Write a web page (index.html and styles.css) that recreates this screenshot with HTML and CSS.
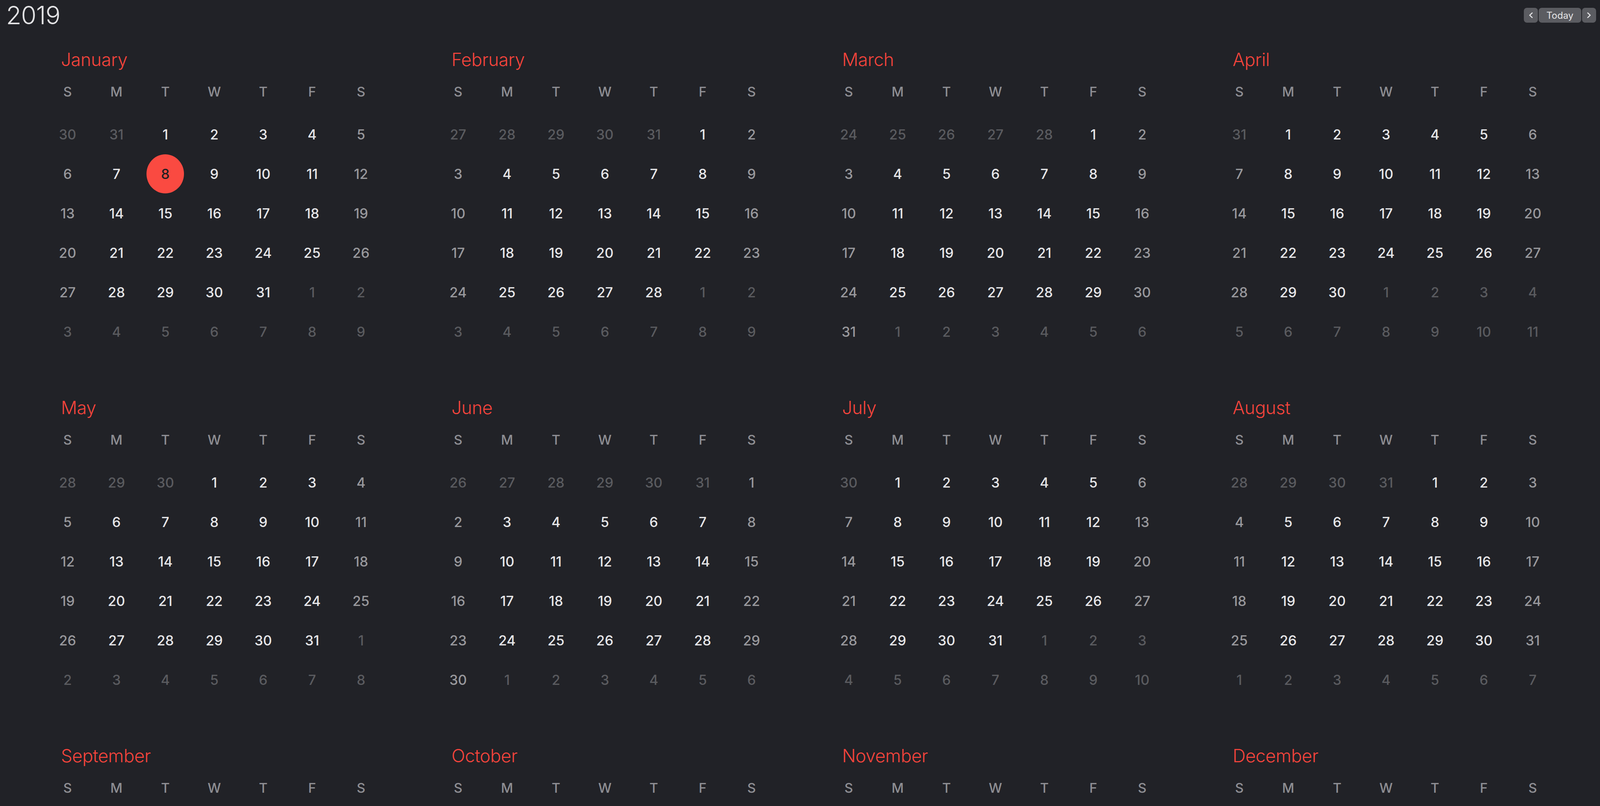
FILE: index.html
```html
<!DOCTYPE html>
<html lang="en">
<head>
<meta charset="utf-8">
<title>2019</title>
<link rel="stylesheet" href="styles.css">
</head>
<body>
<header class="header">
  <h1 class="year">2019</h1>
  <nav class="nav">
    <button class="btn arrow" type="button" aria-label="Previous year"><svg viewBox="0 0 12 16" width="12" height="16"><polyline points="9.5,2 3,8 9.5,14"/></svg></button>
    <button class="btn today-btn" type="button">Today</button>
    <button class="btn arrow" type="button" aria-label="Next year"><svg viewBox="0 0 12 16" width="12" height="16"><polyline points="2.5,2 9,8 2.5,14"/></svg></button>
  </nav>
</header>
<main class="months">

<section class="month">
  <h2 class="month-title">January</h2>
  <div class="weekdays"><span>S</span><span>M</span><span>T</span><span>W</span><span>T</span><span>F</span><span>S</span></div>
  <div class="days">
    <span class="o">30</span><span class="o">31</span><span>1</span><span>2</span><span>3</span><span>4</span><span class="w">5</span>
    <span class="w">6</span><span>7</span><span><span class="today">8</span></span><span>9</span><span>10</span><span>11</span><span class="w">12</span>
    <span class="w">13</span><span>14</span><span>15</span><span>16</span><span>17</span><span>18</span><span class="w">19</span>
    <span class="w">20</span><span>21</span><span>22</span><span>23</span><span>24</span><span>25</span><span class="w">26</span>
    <span class="w">27</span><span>28</span><span>29</span><span>30</span><span>31</span><span class="o">1</span><span class="o">2</span>
    <span class="o">3</span><span class="o">4</span><span class="o">5</span><span class="o">6</span><span class="o">7</span><span class="o">8</span><span class="o">9</span>
  </div>
</section>

<section class="month">
  <h2 class="month-title">February</h2>
  <div class="weekdays"><span>S</span><span>M</span><span>T</span><span>W</span><span>T</span><span>F</span><span>S</span></div>
  <div class="days">
    <span class="o">27</span><span class="o">28</span><span class="o">29</span><span class="o">30</span><span class="o">31</span><span>1</span><span class="w">2</span>
    <span class="w">3</span><span>4</span><span>5</span><span>6</span><span>7</span><span>8</span><span class="w">9</span>
    <span class="w">10</span><span>11</span><span>12</span><span>13</span><span>14</span><span>15</span><span class="w">16</span>
    <span class="w">17</span><span>18</span><span>19</span><span>20</span><span>21</span><span>22</span><span class="w">23</span>
    <span class="w">24</span><span>25</span><span>26</span><span>27</span><span>28</span><span class="o">1</span><span class="o">2</span>
    <span class="o">3</span><span class="o">4</span><span class="o">5</span><span class="o">6</span><span class="o">7</span><span class="o">8</span><span class="o">9</span>
  </div>
</section>

<section class="month">
  <h2 class="month-title">March</h2>
  <div class="weekdays"><span>S</span><span>M</span><span>T</span><span>W</span><span>T</span><span>F</span><span>S</span></div>
  <div class="days">
    <span class="o">24</span><span class="o">25</span><span class="o">26</span><span class="o">27</span><span class="o">28</span><span>1</span><span class="w">2</span>
    <span class="w">3</span><span>4</span><span>5</span><span>6</span><span>7</span><span>8</span><span class="w">9</span>
    <span class="w">10</span><span>11</span><span>12</span><span>13</span><span>14</span><span>15</span><span class="w">16</span>
    <span class="w">17</span><span>18</span><span>19</span><span>20</span><span>21</span><span>22</span><span class="w">23</span>
    <span class="w">24</span><span>25</span><span>26</span><span>27</span><span>28</span><span>29</span><span class="w">30</span>
    <span class="w">31</span><span class="o">1</span><span class="o">2</span><span class="o">3</span><span class="o">4</span><span class="o">5</span><span class="o">6</span>
  </div>
</section>

<section class="month">
  <h2 class="month-title">April</h2>
  <div class="weekdays"><span>S</span><span>M</span><span>T</span><span>W</span><span>T</span><span>F</span><span>S</span></div>
  <div class="days">
    <span class="o">31</span><span>1</span><span>2</span><span>3</span><span>4</span><span>5</span><span class="w">6</span>
    <span class="w">7</span><span>8</span><span>9</span><span>10</span><span>11</span><span>12</span><span class="w">13</span>
    <span class="w">14</span><span>15</span><span>16</span><span>17</span><span>18</span><span>19</span><span class="w">20</span>
    <span class="w">21</span><span>22</span><span>23</span><span>24</span><span>25</span><span>26</span><span class="w">27</span>
    <span class="w">28</span><span>29</span><span>30</span><span class="o">1</span><span class="o">2</span><span class="o">3</span><span class="o">4</span>
    <span class="o">5</span><span class="o">6</span><span class="o">7</span><span class="o">8</span><span class="o">9</span><span class="o">10</span><span class="o">11</span>
  </div>
</section>

<section class="month">
  <h2 class="month-title">May</h2>
  <div class="weekdays"><span>S</span><span>M</span><span>T</span><span>W</span><span>T</span><span>F</span><span>S</span></div>
  <div class="days">
    <span class="o">28</span><span class="o">29</span><span class="o">30</span><span>1</span><span>2</span><span>3</span><span class="w">4</span>
    <span class="w">5</span><span>6</span><span>7</span><span>8</span><span>9</span><span>10</span><span class="w">11</span>
    <span class="w">12</span><span>13</span><span>14</span><span>15</span><span>16</span><span>17</span><span class="w">18</span>
    <span class="w">19</span><span>20</span><span>21</span><span>22</span><span>23</span><span>24</span><span class="w">25</span>
    <span class="w">26</span><span>27</span><span>28</span><span>29</span><span>30</span><span>31</span><span class="o">1</span>
    <span class="o">2</span><span class="o">3</span><span class="o">4</span><span class="o">5</span><span class="o">6</span><span class="o">7</span><span class="o">8</span>
  </div>
</section>

<section class="month">
  <h2 class="month-title">June</h2>
  <div class="weekdays"><span>S</span><span>M</span><span>T</span><span>W</span><span>T</span><span>F</span><span>S</span></div>
  <div class="days">
    <span class="o">26</span><span class="o">27</span><span class="o">28</span><span class="o">29</span><span class="o">30</span><span class="o">31</span><span class="w">1</span>
    <span class="w">2</span><span>3</span><span>4</span><span>5</span><span>6</span><span>7</span><span class="w">8</span>
    <span class="w">9</span><span>10</span><span>11</span><span>12</span><span>13</span><span>14</span><span class="w">15</span>
    <span class="w">16</span><span>17</span><span>18</span><span>19</span><span>20</span><span>21</span><span class="w">22</span>
    <span class="w">23</span><span>24</span><span>25</span><span>26</span><span>27</span><span>28</span><span class="w">29</span>
    <span class="w">30</span><span class="o">1</span><span class="o">2</span><span class="o">3</span><span class="o">4</span><span class="o">5</span><span class="o">6</span>
  </div>
</section>

<section class="month">
  <h2 class="month-title">July</h2>
  <div class="weekdays"><span>S</span><span>M</span><span>T</span><span>W</span><span>T</span><span>F</span><span>S</span></div>
  <div class="days">
    <span class="o">30</span><span>1</span><span>2</span><span>3</span><span>4</span><span>5</span><span class="w">6</span>
    <span class="w">7</span><span>8</span><span>9</span><span>10</span><span>11</span><span>12</span><span class="w">13</span>
    <span class="w">14</span><span>15</span><span>16</span><span>17</span><span>18</span><span>19</span><span class="w">20</span>
    <span class="w">21</span><span>22</span><span>23</span><span>24</span><span>25</span><span>26</span><span class="w">27</span>
    <span class="w">28</span><span>29</span><span>30</span><span>31</span><span class="o">1</span><span class="o">2</span><span class="o">3</span>
    <span class="o">4</span><span class="o">5</span><span class="o">6</span><span class="o">7</span><span class="o">8</span><span class="o">9</span><span class="o">10</span>
  </div>
</section>

<section class="month">
  <h2 class="month-title">August</h2>
  <div class="weekdays"><span>S</span><span>M</span><span>T</span><span>W</span><span>T</span><span>F</span><span>S</span></div>
  <div class="days">
    <span class="o">28</span><span class="o">29</span><span class="o">30</span><span class="o">31</span><span>1</span><span>2</span><span class="w">3</span>
    <span class="w">4</span><span>5</span><span>6</span><span>7</span><span>8</span><span>9</span><span class="w">10</span>
    <span class="w">11</span><span>12</span><span>13</span><span>14</span><span>15</span><span>16</span><span class="w">17</span>
    <span class="w">18</span><span>19</span><span>20</span><span>21</span><span>22</span><span>23</span><span class="w">24</span>
    <span class="w">25</span><span>26</span><span>27</span><span>28</span><span>29</span><span>30</span><span class="w">31</span>
    <span class="o">1</span><span class="o">2</span><span class="o">3</span><span class="o">4</span><span class="o">5</span><span class="o">6</span><span class="o">7</span>
  </div>
</section>

<section class="month">
  <h2 class="month-title">September</h2>
  <div class="weekdays"><span>S</span><span>M</span><span>T</span><span>W</span><span>T</span><span>F</span><span>S</span></div>
</section>

<section class="month">
  <h2 class="month-title">October</h2>
  <div class="weekdays"><span>S</span><span>M</span><span>T</span><span>W</span><span>T</span><span>F</span><span>S</span></div>
</section>

<section class="month">
  <h2 class="month-title">November</h2>
  <div class="weekdays"><span>S</span><span>M</span><span>T</span><span>W</span><span>T</span><span>F</span><span>S</span></div>
</section>

<section class="month">
  <h2 class="month-title">December</h2>
  <div class="weekdays"><span>S</span><span>M</span><span>T</span><span>W</span><span>T</span><span>F</span><span>S</span></div>
</section>

</main>
</body>
</html>
```

FILE: styles.css
```css
* {
  box-sizing: border-box;
}

html,
body {
  margin: 0;
  padding: 0;
  background: #212227;
  overflow-x: hidden;
}

body {
  font-family: Inter, "Noto Sans", "Liberation Sans", sans-serif;
  color: #e6e6e8;
}

/* Horizontal measures are fluid (fractions of the window width, taken
   from a 4760px-wide layout); vertical measures are fixed. */

.header {
  display: flex;
  align-items: center;
  justify-content: space-between;
  height: 78px;
  padding: 0 0.252vw 0 0.378vw;
}

.year {
  margin: 0;
  font-size: 64px;
  font-weight: 300;
  line-height: 78px;
  color: #e2e2e4;
  letter-spacing: -1px;
}

.nav {
  display: flex;
  gap: 2px;
}

.btn {
  display: flex;
  align-items: center;
  justify-content: center;
  height: 38px;
  margin: 0;
  padding: 0;
  border: none;
  border-radius: 8px;
  background: #5b5c61;
  color: #e6e6e8;
  font-family: Inter, "Noto Sans", sans-serif;
}

.arrow {
  width: 0.882vw;
}

.arrow svg {
  display: block;
}

.arrow polyline {
  fill: none;
  stroke: #e6e6e8;
  stroke-width: 2.4;
  stroke-linecap: round;
  stroke-linejoin: round;
}

.today-btn {
  width: 2.647vw;
  font-size: 24px;
  font-weight: 400;
}

.months {
  display: grid;
  grid-template-columns: repeat(4, 21.397vw);
  align-items: start;
  column-gap: 3.015vw;
  row-gap: 113.5px;
  padding: 44px 0 0 2.694vw;
}

.month-title {
  margin: 0;
  padding-left: 5.2%;
  font-size: 46px;
  font-weight: 300;
  line-height: 60px;
  letter-spacing: -0.5px;
  color: #f4443c;
}

.weekdays,
.days {
  display: grid;
  grid-template-columns: repeat(7, 1fr);
}

.weekdays {
  margin-top: 23px;
  height: 60px;
  line-height: 60px;
  text-align: center;
  font-size: 34px;
  font-weight: 500;
  color: #8e8e93;
}

.days {
  margin-top: 28.5px;
  grid-auto-rows: 101px;
}

.days > span {
  display: flex;
  align-items: center;
  justify-content: center;
  font-size: 35px;
  font-weight: 500;
  color: #e6e6e8;
}

.days > .w {
  color: #98989c;
}

.days > .o {
  color: #5a5b5f;
}

.today {
  display: flex;
  align-items: center;
  justify-content: center;
  width: 96px;
  height: 100px;
  border-radius: 50%;
  background: #fa4a41;
  color: #1f1f22;
}
```
